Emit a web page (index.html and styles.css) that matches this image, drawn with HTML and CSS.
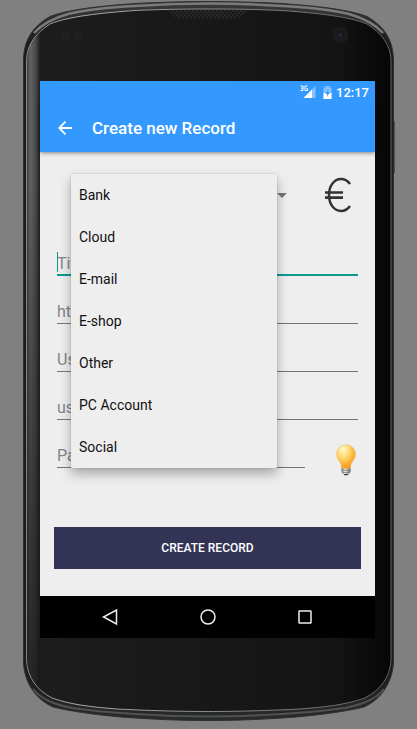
FILE: index.html
```html
<!DOCTYPE html>
<html lang="en">
<head>
<meta charset="utf-8">
<meta name="viewport" content="width=device-width, initial-scale=1">
<title>Create new Record</title>
<link rel="stylesheet" href="styles.css">
</head>
<body>
<div class="phone">
  <svg class="phone-frame" viewBox="23 0 372 722" preserveAspectRatio="none" aria-hidden="true">
    <defs>
      <linearGradient id="rim" x1="0" y1="0" x2="0" y2="1">
        <stop offset="0" stop-color="#3a3a38"/><stop offset=".06" stop-color="#1c1c1c"/>
        <stop offset=".93" stop-color="#1c1c1c"/><stop offset="1" stop-color="#2a2b2b"/>
      </linearGradient>
      <linearGradient id="side" x1="0" y1="0" x2="1" y2="0">
        <stop offset="0" stop-color="#2c2c2c"/><stop offset=".35" stop-color="#626262"/>
        <stop offset=".7" stop-color="#4a4a4a"/><stop offset="1" stop-color="#1d1d1d"/>
      </linearGradient>
      <linearGradient id="fade" x1="0" y1="0" x2="0" y2="1">
        <stop offset="0" stop-color="#181818" stop-opacity="0"/><stop offset="1" stop-color="#181818" stop-opacity=".85"/>
      </linearGradient>
      <linearGradient id="face" x1="0" y1="0" x2="1" y2="0">
        <stop offset="0" stop-color="#1d1d1d"/><stop offset=".85" stop-color="#141414"/><stop offset="1" stop-color="#060606"/>
      </linearGradient>
      <linearGradient id="shine" x1="0" y1="0" x2="1" y2="0">
        <stop offset="0" stop-color="#858585"/><stop offset=".15" stop-color="#a8abad"/><stop offset="1" stop-color="#606060"/>
      </linearGradient>
      <path id="face-shape" d="M26.500 60C27 44 36 33 50 24C68 16.500 100 13 135 10.500C170 9 190 9 208.500 9C227 9 247 9 282 10.500C317 13 349 16.500 367 24C381 33 390.500 44 391 60V660C390 678 380 690 365 698C345 705 325 707 300 709C260 711 230 711.500 208.500 711.500C187 711.500 157 711 117 709C92 707 72 705 52 698C37 690 27.500 678 26.500 660Z"/>
      <clipPath id="face-clip"><use href="#face-shape"/></clipPath>
      <pattern id="mesh" width="4" height="4" patternUnits="userSpaceOnUse"><rect width="4" height="4" fill="#282828"/><circle cx="1" cy="1" r="1" fill="#141414"/><circle cx="3" cy="3" r="1" fill="#141414"/></pattern>
    </defs>
    <path d="M392 121h2.500v52h-2.500z" fill="#1b1b1b"/>
    <path d="M23.500 60C24 40 32 27 50 16.500C68 9.500 100 6 135 3.500C165 2 190 1.500 208.500 1.500C227 1.500 252 2 282 3.500C317 6 349 9.500 367 16.500C385 27 393 40 393.500 60V663C392 682 382 699 364 707C340 713 300 717 282 718C250 720 230 720.500 208.500 720.500C187 720.500 167 720 135 718C117 717 77 713 53 707C35 699 24.500 682 23.500 663Z" fill="url(#rim)" stroke="#303030"/>
    <path d="M34 33C42 24 54 18 68 14C90 9 115 7 135 6C165 4 190 3.500 208.500 3.500C227 3.500 252 4 282 6C302 7 327 9 349 14C363 18 375 24 383 33" fill="none" stroke="#7b7b79" stroke-width="2.500"/>
    <path d="M33 689C41 699 53 704 72 708C92 711 117 713 135 714C165 716 190 716.500 208.500 716.500C227 716.500 252 716 282 714C300 713 325 711 345 708C364 704 376 699 384 689" fill="none" stroke="#505252" stroke-width="2"/>
    <use href="#face-shape" fill="url(#face)"/>
    <g clip-path="url(#face-clip)">
      <rect x="25" y="15" width="15" height="690" fill="url(#side)"/>
      <rect x="25" y="180" width="15" height="525" fill="url(#fade)"/>
      <path d="M164 9Q169 10 172 14Q174 18 179 18H236Q241 18 243 14Q246 10 251 9Z" fill="url(#mesh)" stroke="#222"/>
    </g>
    <use href="#face-shape" fill="none" stroke="url(#shine)"/>
    <circle cx="65.500" cy="35.500" r="5" fill="#202020"/><circle cx="78.500" cy="35.500" r="5" fill="#202020"/>
    <circle cx="340.500" cy="35" r="8" fill="#1b1b1c"/><circle cx="340.500" cy="35" r="3.500" fill="#19191f"/><circle cx="340.500" cy="35" r="1.500" fill="#29264a"/>
  </svg>

  <main class="screen">
    <div class="status-bar">
      <svg class="signal" viewBox="0 0 17 14" role="img" aria-label="3G signal">
        <path d="M15.500 1V13H3.500Z" fill="#86c1ff"/><path d="M12 4.500V13H3.500Z" fill="#fff"/>
        <path d="M.500 1H3V5.500H.500M1 3.200H3M7.500 1H5V5.500H7.500V3.500H6.500" fill="none" stroke="#fff" stroke-width="1"/>
      </svg>
      <svg class="battery" viewBox="0 0 9 13" role="img" aria-label="Battery charging">
        <path d="M2.500 0H6.500V1.500H8.500V13H.500V1.500H2.500Z" fill="#86c1ff"/><path d="M.500 7H8.500V13H.500Z" fill="#fff"/><path d="M5.500 3L2.300 8H4.300L3.700 11L7 6.300H4.900Z" fill="#3499ff"/>
      </svg>
      <time>12:17</time>
    </div>
    <header class="app-bar">
      <button class="back" type="button" aria-label="Back">
        <svg viewBox="0 0 14 14"><path d="M14 7H1.500M7.500.700L1.200 7L7.500 13.300" fill="none" stroke="#fff" stroke-width="1.800"/></svg>
      </button>
      <h1>Create new Record</h1>
    </header>

    <form class="record-form">
      <div class="category-row">
        <div class="category">
          <select aria-label="Category">
            <option>Bank</option><option>Cloud</option><option>E-mail</option><option>E-shop</option><option>Other</option><option>PC Account</option><option>Social</option>
          </select>
          <ul class="menu">
            <li>Bank</li><li>Cloud</li><li>E-mail</li><li>E-shop</li><li>Other</li><li>PC Account</li><li>Social</li>
          </ul>
        </div>
        <svg class="caret-down" viewBox="0 0 10 5" aria-hidden="true"><path d="M0 0H10L5 5Z" fill="#757575"/></svg>
        <svg class="euro" viewBox="0 0 28 36" role="img" aria-label="Euro">
          <path d="M26 7C23.500 3.500 20.500 2 17 2C10 2 5 9 5 18C5 27 10 34 17 34C20.500 34 23.500 32.500 26 29" fill="none" stroke="#333" stroke-width="2.500"/>
          <path d="M1 15.500H19M1 20.700H19" fill="none" stroke="#333" stroke-width="2.700"/>
        </svg>
      </div>
      <div class="field active"><input type="text" placeholder="Title" aria-label="Title"><span class="text-caret"></span></div>
      <div class="field"><input type="text" placeholder="http://" aria-label="Web address"></div>
      <div class="field"><input type="text" placeholder="User" aria-label="User"></div>
      <div class="field"><input type="text" placeholder="user" aria-label="User email"></div>
      <div class="password-row">
        <div class="field"><input type="text" placeholder="Password" aria-label="Password"></div>
        <button class="suggest" type="button" aria-label="Suggest password">
          <svg viewBox="0 0 20 32">
            <defs>
              <radialGradient id="glass" cx=".35" cy=".2" r=".8"><stop offset="0" stop-color="#fff7cf"/><stop offset=".35" stop-color="#ffdf7e"/><stop offset=".75" stop-color="#fbb034"/><stop offset="1" stop-color="#f39a1e"/></radialGradient>
              <linearGradient id="cap"><stop offset="0" stop-color="#777"/><stop offset=".4" stop-color="#eee"/><stop offset="1" stop-color="#666"/></linearGradient>
            </defs>
            <path d="M10 .800C4.500.800.600 5 .600 10.200C.600 14 2.300 16 4 18.200C5.200 20 5.500 22 5.700 25H14.300C14.500 22 14.800 20 16 18.200C17.700 16 19.400 14 19.400 10.200C19.400 5 15.500.800 10 .800Z" fill="url(#glass)" stroke="#e8b765" stroke-width=".5"/>
            <path d="M5.500 24.500H14.500V28L13 30H7L5.500 28Z" fill="url(#cap)"/><path d="M5.500 26.300H14.500M6 28.500H14" stroke="#777" stroke-width=".7"/><path d="M7.500 30H12.500L11.500 31.300H8.500Z" fill="#333"/>
          </svg>
        </button>
      </div>
      <button class="submit" type="button">CREATE RECORD</button>
    </form>

    <nav class="nav-bar" aria-label="System">
      <button type="button" aria-label="Back"><svg viewBox="0 0 18 18"><path d="M15.500 2V16L2.500 9Z"/></svg></button>
      <button type="button" aria-label="Home"><svg viewBox="0 0 18 18"><circle cx="9" cy="9" r="7"/></svg></button>
      <button type="button" aria-label="Recent apps"><svg viewBox="0 0 18 18"><rect x="3" y="3" width="12" height="12" rx=".5"/></svg></button>
    </nav>
  </main>
</div>
</body>
</html>
```
FILE: styles.css
```css
* { box-sizing: border-box; }

body {
  margin: 0;
  background: #808080;
  font-family: Roboto, "Liberation Sans", sans-serif;
  color: #111;
}

button {
  padding: 0;
  border: 0;
  background: none;
  font: inherit;
}

svg { display: block; }

.phone {
  position: relative;
  margin: 0 22px 7px 23px;
  padding: 81px 20px 84px 17px;
}

.phone-frame {
  position: absolute;
  inset: 0;
  width: 100%;
  height: 100%;
}

.screen {
  position: relative;
  background: #eee;
}

.status-bar {
  position: relative;
  z-index: 1;
  display: flex;
  align-items: center;
  justify-content: flex-end;
  height: 22px;
  padding-right: 6px;
  background: #3499ff;
  color: #fff;
  font-size: 13px;
  font-weight: 500;
}

.signal { width: 17px; height: 14px; margin-right: 6px; }
.battery { width: 9px; height: 13px; margin-right: 4px; }

.app-bar {
  display: flex;
  align-items: center;
  gap: 20px;
  height: 49px;
  padding: 0 18px;
  background: #3499ff;
  box-shadow: 0 1px 4px rgba(0, 0, 0, 0.45);
  color: #fff;
}

.back svg { width: 14px; height: 14px; }

h1 {
  margin: 0;
  font-size: 17px;
  font-weight: 500;
  line-height: 24px;
}

.record-form {
  display: flex;
  flex-direction: column;
  gap: 24px;
  padding: 22px 14px 27px;
}

.category-row {
  display: flex;
  align-items: center;
  height: 54px;
  padding: 0 9px 12px 17px;
}

.category {
  position: relative;
  flex: 1;
}

.category select {
  display: block;
  width: 100%;
  height: 42px;
  padding: 0 8px;
  border: 0;
  appearance: none;
  background: transparent;
  font: inherit;
  font-size: 14px;
}

.menu {
  position: absolute;
  z-index: 1;
  top: 0;
  left: 0;
  width: 100%;
  margin: 0;
  padding: 0;
  border-radius: 1px;
  background: #eee;
  box-shadow: 0 6px 12px rgba(0, 0, 0, 0.3), 0 0 2px rgba(0, 0, 0, 0.2);
  list-style: none;
  font-size: 14px;
}

.menu li {
  padding: 0 8px;
  line-height: 42px;
}

.caret-down { width: 10px; height: 5px; margin-right: 37px; }
.euro { width: 28px; height: 36px; }

.field {
  position: relative;
  margin: 0 3px;
}

.field input {
  display: block;
  width: 100%;
  height: 24px;
  padding: 0;
  border: 0;
  border-bottom: 1px solid #757575;
  border-radius: 0;
  outline: 0;
  background: transparent;
  font: inherit;
  font-size: 16px;
}

.field input::placeholder { color: #858585; opacity: 1; }
.active input { border-bottom: 2px solid #0b9c8e; }

.text-caret {
  position: absolute;
  top: 0;
  left: 0;
  width: 1px;
  height: 20px;
  background: #0b9c8e;
}

.password-row {
  display: flex;
  align-items: flex-start;
  height: 36px;
}

.password-row .field { flex: 1; margin-right: 31px; }
.suggest { margin-right: 5px; }
.suggest svg { width: 20px; height: 32px; }

.submit {
  height: 42px;
  margin-top: 23px;
  background: #333355;
  color: #fff;
  font-size: 12px;
  font-weight: 500;
}

.nav-bar {
  display: flex;
  align-items: center;
  justify-content: space-between;
  height: 42px;
  padding: 0 61px;
  background: #000;
}

.nav-bar svg {
  width: 18px;
  height: 18px;
  fill: none;
  stroke: #eee;
  stroke-width: 1.500;
}
```
